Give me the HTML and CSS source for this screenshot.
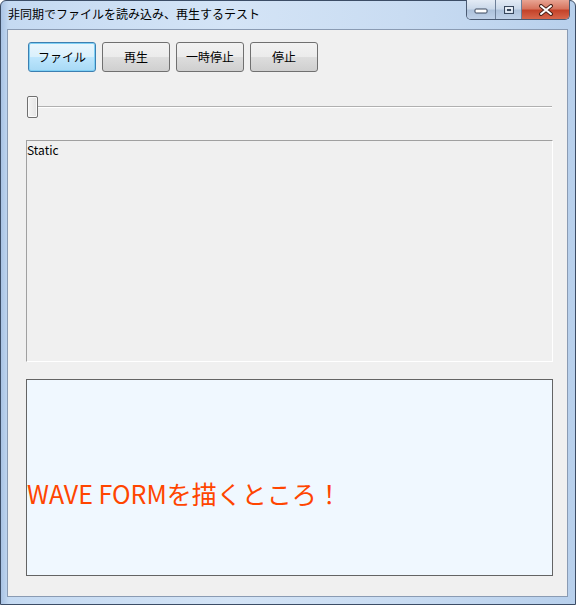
FILE: index.html
```html
<!DOCTYPE html>
<html lang="ja">
<head>
<meta charset="utf-8">
<link rel="stylesheet" href="styles.css">
</head>
<body>
<div class="window">
  <div class="titlebar">
    <div class="title">非同期でファイルを読み込み、再生するテスト</div>
    <div class="caption">
      <div class="cbtn min"><svg width="14" height="8" viewBox="0 0 14 8"><rect x="1" y="3" width="12" height="4" rx="1" fill="#fff" stroke="#38475c"/></svg></div>
      <div class="cbtn max"><svg width="12" height="10" viewBox="0 0 12 10"><rect x="1.5" y="1.5" width="9" height="7" fill="none" stroke="#38475c" stroke-width="1"/><rect x="3" y="3" width="6" height="4" fill="none" stroke="#fff" stroke-width="1"/><rect x="4.5" y="4.5" width="3" height="1" fill="none" stroke="#38475c" stroke-width="1"/></svg></div>
      <div class="cbtn close"><svg width="16" height="12" viewBox="0 0 16 12"><path d="M3 2 L13 10 M13 2 L3 10" stroke="#4b2218" stroke-width="4" stroke-linecap="round"/><path d="M3 2 L13 10 M13 2 L3 10" stroke="#fff" stroke-width="2" stroke-linecap="round"/></svg></div>
    </div>
  </div>
  <div class="client">
    <div class="buttons">
      <button class="btn focused">ファイル</button>
      <button class="btn">再生</button>
      <button class="btn">一時停止</button>
      <button class="btn">停止</button>
    </div>
    <div class="slider">
      <div class="track"></div>
      <div class="thumb"></div>
    </div>
    <div class="static">Static</div>
    <div class="wave"><span class="wave-text">WAVE FORMを描くところ！</span></div>
  </div>
</div>
</body>
</html>
```
FILE: styles.css
```css
html, body {
  margin: 0;
  padding: 0;
  background: #ffffff;
}
body {
  font-family: "Noto Sans CJK JP", "Noto Sans", sans-serif;
}
.window {
  width: 576px;
  height: 605px;
  box-sizing: border-box;
  border: 1px solid #3c4d66;
  border-radius: 6px 6px 0 0;
  background: linear-gradient(90deg, #a9c3e4 0px, #c5daf2 8px, #d4e4f6 40%, #c9dcf2 70%, #b8d0ec 100%);
  display: flex;
  flex-direction: column;
  position: relative;
}
.titlebar {
  height: 28px;
  display: flex;
  align-items: flex-start;
  justify-content: space-between;
}
.title {
  font-size: 12px;
  color: #000;
  padding: 5px 0 0 7px;
  line-height: 16px;
}
.caption {
  display: flex;
  margin-right: 5px;
  margin-top: -1px;
  border: 1px solid #4a5a72;
  border-top: none;
  border-radius: 0 0 5px 5px;
  overflow: hidden;
  height: 19px;
}
.cbtn {
  display: flex;
  align-items: center;
  justify-content: center;
  height: 19px;
}
.min, .max {
  background: linear-gradient(#e3ebf5 0%, #cbd9ea 45%, #aec2db 55%, #bfd1e8 100%);
}
.min { width: 28px; border-right: 1px solid #6d7f98; }
.max { width: 25px; border-right: 1px solid #6d7f98; }
.close {
  width: 47px;
  background: linear-gradient(#e8a493 0%, #d7755f 45%, #c4432a 55%, #d7674c 100%);
}
.client {
  flex: 1;
  margin: 0 7px 7px 6px;
  border: 1px solid #8a9bb3;
  background: #f0f0f0;
  padding: 12px 14px 20px 18px;
  display: flex;
  flex-direction: column;
}
.buttons {
  display: flex;
  gap: 6px;
  padding-left: 2px;
}
.btn {
  width: 68px;
  height: 30px;
  box-sizing: border-box;
  border: 1px solid #707070;
  border-radius: 3px;
  background: linear-gradient(#f2f2f2 0%, #ebebeb 50%, #dddddd 51%, #cfcfcf 100%);
  font-family: "Noto Sans CJK JP", sans-serif;
  font-size: 12px;
  color: #000;
  padding: 0;
  line-height: 28px;
}
.focused {
  border-color: #3c7fb1;
  box-shadow: inset 0 0 0 1px #7fd0f5;
  background: linear-gradient(#eaf6fd 0%, #d9f0fc 50%, #bee6fd 51%, #a7d9f5 100%);
}
.slider {
  margin-top: 24px;
  height: 22px;
  position: relative;
  display: flex;
  align-items: center;
  margin-left: 1px;
}
.track {
  flex: 1;
  height: 1px;
  background: #b0b0b0;
  border-bottom: 1px solid #ffffff;
  margin-left: 2px;
  margin-right: 1px;
}
.thumb {
  position: absolute;
  left: 0;
  top: 0;
  width: 11px;
  height: 22px;
  box-sizing: border-box;
  border: 1px solid #707070;
  border-radius: 2px;
  background: linear-gradient(90deg, #f4f4f4, #e4e4e4);
  box-shadow: inset 0 0 0 1px #fafafa;
}
.static {
  margin-top: 22px;
  height: 222px;
  box-sizing: border-box;
  border-top: 1px solid #a0a0a0;
  border-left: 1px solid #a0a0a0;
  border-right: 1px solid #ffffff;
  border-bottom: 1px solid #ffffff;
  font-size: 12px;
  line-height: 16px;
  padding: 1px 0 0 0;
  color: #000;
}
.wave {
  margin-top: 17px;
  flex: 1;
  box-sizing: border-box;
  border: 1px solid #646464;
  background: #f0f8ff;
  padding-top: 97px;
}
.wave-text {
  display: block;
  font-size: 25px;
  line-height: 32px;
  color: #ff4500;
}
```
